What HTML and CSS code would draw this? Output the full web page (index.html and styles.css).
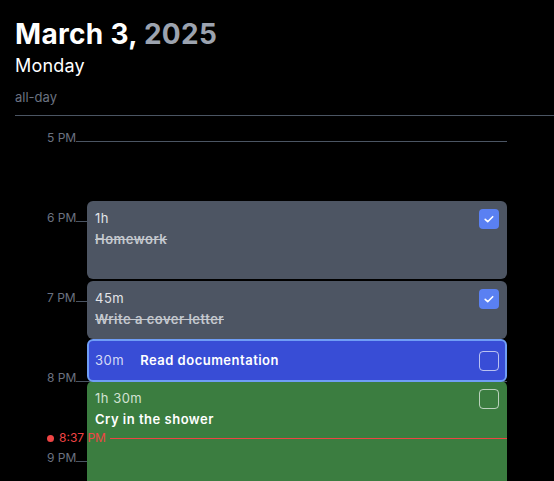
FILE: index.html
```html
<!DOCTYPE html>
<html lang="en">
<head>
<meta charset="utf-8">
<title>March 3, 2025</title>
<link rel="stylesheet" href="styles.css">
</head>
<body>
<header class="header">
  <h1 class="title">March 3, <span class="year">2025</span></h1>
  <div class="weekday">Monday</div>
  <div class="allday">all-day</div>
  <div class="divider"></div>
</header>
<main class="timeline">
  <div class="hour"><div class="hour-head"><span class="hour-label">5 PM</span><span class="hour-line"></span></div></div>
  <div class="hour"><div class="hour-head"><span class="hour-label">6 PM</span><span class="hour-line"></span></div></div>
  <div class="hour"><div class="hour-head"><span class="hour-label">7 PM</span><span class="hour-line"></span></div></div>
  <div class="hour"><div class="hour-head"><span class="hour-label">8 PM</span><span class="hour-line"></span></div></div>
  <div class="hour"><div class="hour-head"><span class="hour-label">9 PM</span><span class="hour-line"></span></div></div>

  <div class="event event-done" style="top:69px;height:78px">
    <div class="event-text">
      <div class="event-dur">1h</div>
      <div class="event-name">Homework</div>
    </div>
    <span class="check check-on"><svg viewBox="0 0 20 20" width="20" height="20"><path d="M6.2 10.4l2.5 2.3 5-5" fill="none" stroke="#fff" stroke-width="1.6" stroke-linecap="round" stroke-linejoin="round"/></svg></span>
  </div>

  <div class="event event-done" style="top:149px;height:58px">
    <div class="event-text">
      <div class="event-dur">45m</div>
      <div class="event-name">Write a cover letter</div>
    </div>
    <span class="check check-on"><svg viewBox="0 0 20 20" width="20" height="20"><path d="M6.2 10.4l2.5 2.3 5-5" fill="none" stroke="#fff" stroke-width="1.6" stroke-linecap="round" stroke-linejoin="round"/></svg></span>
  </div>

  <div class="event event-active" style="top:249px;height:120px">
    <div class="event-text">
      <div class="event-dur">1h 30m</div>
      <div class="event-name">Cry in the shower</div>
    </div>
    <span class="check"></span>
  </div>

  <div class="event event-selected" style="top:207px;height:43px">
    <div class="event-row">
      <span class="event-dur">30m</span>
      <span class="event-name">Read documentation</span>
    </div>
    <span class="check"></span>
  </div>

  <div class="now" style="top:300px">
    <span class="now-dot"></span>
    <span class="now-label">8:37 PM</span>
    <span class="now-line"></span>
  </div>
</main>
</body>
</html>
```

FILE: styles.css
```css
html, body {
  margin: 0;
  padding: 0;
  background: #000;
  overflow: hidden;
}
body {
  font-family: Inter, "Liberation Sans", sans-serif;
  color: #fff;
}
.header {
  padding: 17px 0 0 15px;
}
.title {
  margin: 0;
  font-size: 28px;
  line-height: 34px;
  font-weight: 700;
  letter-spacing: 0.3px;
}
.year {
  color: #9ca3af;
}
.weekday {
  margin-top: 4px;
  font-size: 18px;
  line-height: 22px;
  letter-spacing: 0.2px;
}
.allday {
  margin-top: 11px;
  font-size: 13px;
  line-height: 18px;
  color: #6b7280;
}
.divider {
  margin-top: 9px;
  height: 1px;
  background: #4b5563;
}
.timeline {
  position: relative;
  margin: 16px 0 0 47px;
  width: 460px;
}
.hour {
  height: 80px;
}
.hour-head {
  display: flex;
  height: 12px;
}
.hour-label {
  font-size: 12px;
  line-height: 12px;
  color: #6b7280;
}
.hour-line {
  flex: 1;
  align-self: flex-end;
  height: 1px;
  margin-bottom: 2px;
  background: #4b5563;
}
.event {
  position: absolute;
  left: 40px;
  right: 0;
  box-sizing: border-box;
  border-radius: 6px;
  padding: 7px 8px;
  display: flex;
  justify-content: space-between;
  align-items: flex-start;
  font-size: 13px;
  line-height: 21px;
  letter-spacing: 0.5px;
}
.event-done {
  background: #4d5563;
}
.event-done .event-dur {
  color: #e2e4e8;
}
.event-done .event-name {
  font-weight: 600;
  color: #c5c9cf;
  text-decoration: line-through;
}
.event-active {
  background: #3b7d40;
}
.event-active .event-dur {
  color: #d2e2d3;
}
.event-active .event-name {
  font-weight: 600;
  color: #fff;
}
.event-selected {
  z-index: 2;
  background: #384dd6;
  border: 2px solid #6f9df6;
  padding: 0 6px;
  align-items: center;
}
.event-row {
  display: flex;
  gap: 16px;
}
.event-selected .event-dur {
  color: #d5dbf6;
}
.event-selected .event-name {
  font-weight: 600;
  color: #fff;
}
.check {
  flex: none;
  box-sizing: border-box;
  width: 20px;
  height: 20px;
  margin-top: 1px;
  border-radius: 4px;
  border: 1.5px solid rgba(255, 255, 255, 0.65);
}
.event-selected .check {
  margin-top: 0;
}
.check-on {
  border: none;
  background: #5a80f2;
}
.check-on svg {
  display: block;
}
.now {
  position: absolute;
  z-index: 3;
  left: 0;
  right: 0;
  display: flex;
  align-items: center;
  height: 12px;
}
.now-dot {
  width: 7px;
  height: 7px;
  border-radius: 50%;
  background: #ef4444;
  margin-right: 5px;
}
.now-label {
  font-size: 12px;
  line-height: 12px;
  color: #ef4444;
  margin-right: 4px;
}
.now-line {
  flex: 1;
  height: 1px;
  background: #ef4444;
}
```
